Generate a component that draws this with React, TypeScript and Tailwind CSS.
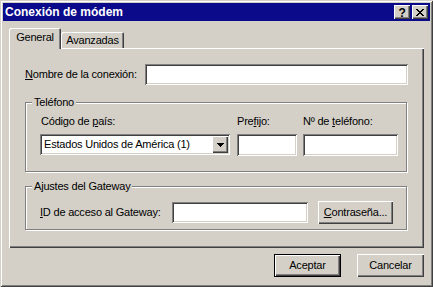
import React from 'react';

const raised = 'bg-[#d4d0c8] shadow-[inset_1px_1px_#ffffff,inset_-1px_-1px_#404040,inset_-2px_-2px_#808080]';
const sunken = 'bg-white shadow-[inset_1px_1px_#808080,inset_-1px_-1px_#ffffff,inset_2px_2px_#404040,inset_-2px_-2px_#d4d0c8]';
const etched = 'relative border border-[#808080] shadow-[inset_1px_1px_#ffffff,1px_1px_#ffffff]';

function CloseGlyph() {
  const rows = ['XX....XX', '.XX..XX.', '..XXXX..', '...XX...', '..XXXX..', '.XX..XX.', 'XX....XX'];
  return (
    <svg width="8" height="7" viewBox="0 0 8 7" shapeRendering="crispEdges">
      {rows.map((r, y) =>
        r.split('').map((c, x) => (c === 'X' ? <rect key={`${x}-${y}`} x={x} y={y} width="1" height="1" fill="#000" /> : null))
      )}
    </svg>
  );
}

function DownArrow() {
  return (
    <svg width="7" height="4" viewBox="0 0 7 4" shapeRendering="crispEdges">
      <rect x="0" y="0" width="7" height="1" fill="#000" />
      <rect x="1" y="1" width="5" height="1" fill="#000" />
      <rect x="2" y="2" width="3" height="1" fill="#000" />
      <rect x="3" y="3" width="1" height="1" fill="#000" />
    </svg>
  );
}

function GroupBox({ title, className, children }: { title: string; className: string; children: React.ReactNode }) {
  return (
    <div className={`${etched} ${className}`}>
      <span className="absolute left-[6px] -top-[7px] px-[2px] bg-[#d4d0c8] leading-[13px]">{title}</span>
      {children}
    </div>
  );
}

export default function App() {
  return (
    <div className="w-[433px] h-[287px] bg-[#d4d0c8] p-[3px] flex flex-col font-['Liberation_Sans',Arial,sans-serif] text-[11px] tracking-[-0.2px] text-black shadow-[inset_1px_1px_#d4d0c8,inset_-1px_-1px_#404040,inset_2px_2px_#ffffff,inset_-2px_-2px_#808080]">
      {/* Title bar */}
      <div className="h-[18px] bg-[#0a0a8a] flex items-center pl-[2px] pr-[2px]">
        <span className="text-white font-bold text-[12px] tracking-normal leading-none">Conexión de módem</span>
        <div className="ml-auto flex gap-[2px]">
          <div className={`w-[16px] h-[14px] ${raised} flex items-center justify-center font-bold text-[12px] leading-none pt-px`}>?</div>
          <div className={`w-[16px] h-[14px] ${raised} flex items-center justify-center`}>
            <CloseGlyph />
          </div>
        </div>
      </div>

      <div className="px-[6px] pt-[7px] flex flex-col">
        {/* Tabs */}
        <div className="flex items-end h-[20px]">
          <div className="relative z-10 w-[52px] h-[21px] -mb-px bg-[#d4d0c8] rounded-t-[2px] shadow-[inset_1px_1px_#ffffff,inset_-1px_0_#404040,inset_-2px_0_#808080] flex items-center justify-center pb-[2px]">
            General
          </div>
          <div className="w-[63px] h-[16px] bg-[#d4d0c8] rounded-t-[2px] shadow-[inset_1px_1px_#ffffff,inset_-1px_0_#404040,inset_-2px_0_#808080] flex items-center justify-center">
            Avanzadas
          </div>
        </div>

        {/* Panel */}
        <div className="h-[200px] px-[16px] pt-[16px] flex flex-col shadow-[inset_1px_1px_#ffffff,inset_-1px_-1px_#404040,inset_-2px_-2px_#808080]">
          <div className="flex items-center h-[21px]">
            <span>
              <span className="underline">N</span>ombre de la conexión:
            </span>
            <div className={`ml-auto w-[263px] h-[21px] ${sunken}`} />
          </div>

          <GroupBox title="Teléfono" className="mt-[17px] w-[382px] h-[70px] pl-[14px] pt-[12px]">
            <div className="flex">
              <div className="flex flex-col w-[190px]">
                <span className="h-[13px] leading-[13px] pl-px">
                  Código de <span className="underline">p</span>aís:
                </span>
                <div className={`mt-[6px] h-[21px] ${sunken} flex items-center pl-[4px] pr-[2px]`}>
                  <span>Estados Unidos de América (1)</span>
                  <div className={`ml-auto w-[16px] h-[17px] ${raised} flex items-center justify-center`}>
                    <DownArrow />
                  </div>
                </div>
              </div>
              <div className="flex flex-col w-[60px] ml-[7px]">
                <span className="h-[13px] leading-[13px]">
                  Pre<span className="underline">f</span>ijo:
                </span>
                <div className={`mt-[6px] h-[22px] ${sunken}`} />
              </div>
              <div className="flex flex-col w-[95px] ml-[6px]">
                <span className="h-[13px] leading-[13px]">
                  Nº de <span className="underline">t</span>eléfono:
                </span>
                <div className={`mt-[6px] h-[22px] ${sunken}`} />
              </div>
            </div>
          </GroupBox>

          <GroupBox title="Ajustes del Gateway" className="mt-[14px] w-[382px] h-[44px] pl-[14px] pt-[14px]">
            <div className="flex items-center h-[23px]">
              <span className="w-[132px]">
                <span className="underline">I</span>D de acceso al Gateway:
              </span>
              <div className={`w-[136px] h-[21px] ${sunken}`} />
              <div className={`ml-[10px] w-[75px] h-[23px] ${raised} flex items-center justify-center`}>
                <span>
                  <span className="underline">C</span>ontraseña...
                </span>
              </div>
            </div>
          </GroupBox>
        </div>

        {/* Dialog buttons */}
        <div className="flex justify-end gap-[16px] mt-[6px]">
          <div className="w-[67px] h-[23px] border border-black">
            <div className={`w-full h-full ${raised} flex items-center justify-center`}>Aceptar</div>
          </div>
          <div className={`w-[67px] h-[23px] ${raised} flex items-center justify-center`}>Cancelar</div>
        </div>
      </div>
    </div>
  );
}
